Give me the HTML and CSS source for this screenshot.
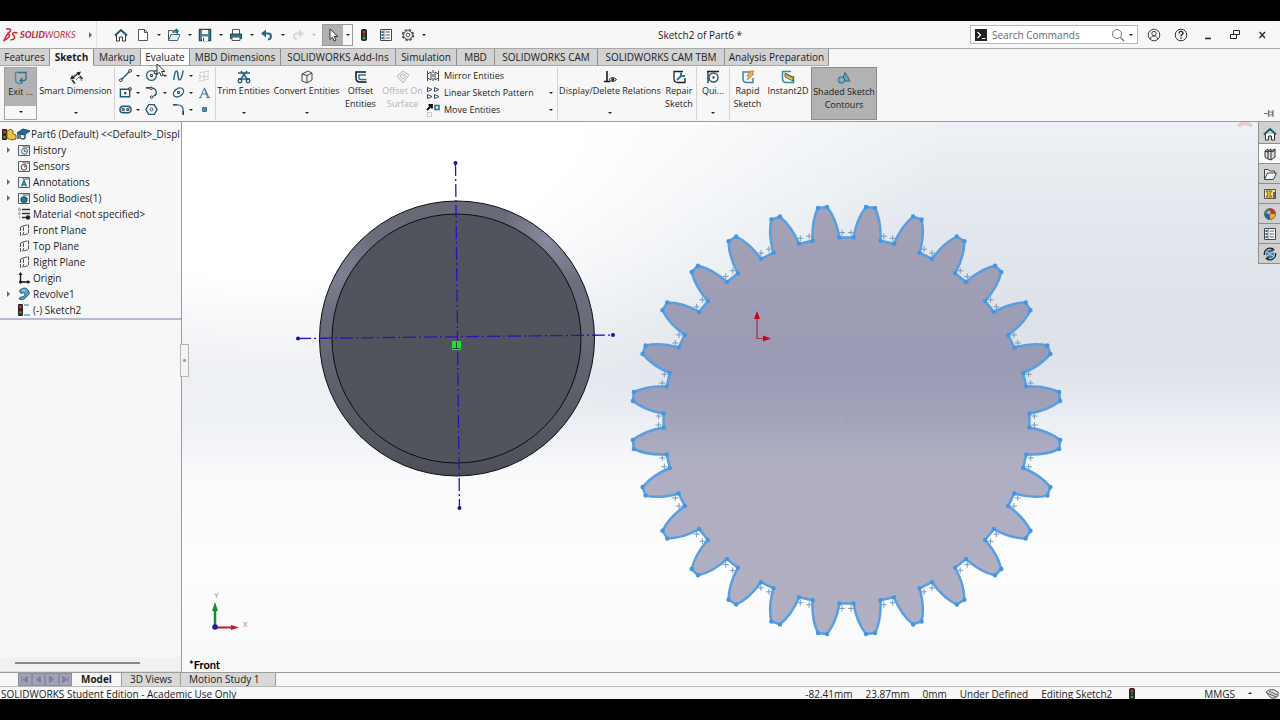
FILE: index.html
```html
<!DOCTYPE html>
<html lang="en">
<head>
    <meta charset="UTF-8">
    <meta name="viewport" content="width=device-width, initial-scale=1.0">
    <title>Sketch2 of Part6 *</title>
    <link rel="stylesheet" href="styles.css">
</head>
<body>
    <!-- shared icons -->
    <svg class="sprite" width="0" height="0">
        <symbol id="home" viewBox="0 0 14 14"><path d="M2.500 7v6h3V9h3v4h3V7" fill="#fff" stroke="#333" /><path d="M1 7.500 7 2l6 5.500" fill="none" stroke="#1d5a76" stroke-width="2" /></symbol>
        <symbol id="folder" viewBox="0 0 14 14"><path d="M1.500 12.500v-10h4l1 1.500h6v8.500z" fill="#f0f2f4" stroke="#555e68" /><path d="M6 2.500h6.500V4" fill="none" stroke="#555e68" /></symbol>
        <symbol id="plane" viewBox="0 0 14 14"><path d="M3.500 4l3-1.500v9l-3 1zM6.500 3l5-1.500v9l-5 1.500" fill="none" stroke="#555" stroke-dasharray="4 1" /></symbol>
        <symbol id="lights" viewBox="0 0 14 14"><rect x="4" y="1" width="6" height="12" rx="2" fill="#222" /><circle cx="7" cy="4" r="1.600" fill="#c33" /><circle cx="7" cy="7" r="1.200" fill="#553" /><circle cx="7" cy="10" r="1.600" fill="#2a9a3a" /></symbol>
        <symbol id="list" viewBox="0 0 14 14"><path d="M1.500 1.500h11v11h-11z" fill="#fff" stroke="#444" /><path d="M5 2v10" stroke="#777" /><path d="M2.500 4h2M2.500 7h2M2.500 10h2" stroke="#1d6b8a" stroke-width="2" /><path d="M6.500 4H11M6.500 7H11M6.500 10H11" stroke="#555" /></symbol>
    </svg>

    <div class="app">
        <header class="titlebar">
            <div class="brand">
                <svg class="ds" viewBox="0 0 16 14"><path d="M3 1h4c1.500 1 0 3-2.500 4.500M4.500 6C8 6 7 10 1 12.500c1-2.500 2-4 3.500-6.500zM14.500 5c-4-1.500-6 .5-4 2.500s1.500 4-3 4.500" fill="none" stroke="#c8283c" stroke-width="1.500" /></svg>
                <span class="wordmark"><b>SOLID</b>WORKS</span>
            </div>
            <button class="expand" aria-label="Show menu"><i class="tri"></i></button>
            <div class="quick">
                <button class="home" aria-label="Home"><svg class="icon"><use href="#home" /></svg></button>
                <button aria-label="New"><svg class="icon" viewBox="0 0 14 14"><path d="M2.500 1.500h6l3 3v8h-9zM8.500 1.500v3h3" fill="#fff" stroke="#555" /></svg></button>
                <button class="drop" aria-label="New options"></button>
                <button aria-label="Open"><svg class="icon" viewBox="0 0 14 14"><path d="M1.500 12V2.500h4l1 1.500h4v2" fill="#fff" stroke="#555" /><path d="M1.500 12.500 4 6.500h9l-2.500 6z" fill="#e4edf1" stroke="#44697a" /><path d="M6 5c0-3 3-3 5-2M9 1l2 2-2 2" fill="none" stroke="#1d6b8a" stroke-width="1.500" /></svg></button>
                <button class="drop" aria-label="Open options"></button>
                <button aria-label="Save"><svg class="icon" viewBox="0 0 14 14"><path d="M1.500 1.500h11v11h-11z" fill="#5d8398" stroke="#244c60" stroke-width="1.500" /><path d="M4 2h6v4H4zM4 8.500h6V13H4z" fill="#f4f7f8" /><path d="M5.500 10v3" stroke="#244c60" /></svg></button>
                <button class="drop" aria-label="Save options"></button>
                <button aria-label="Print"><svg class="icon" viewBox="0 0 14 14"><path d="M3.500 6V1.500h7V6" fill="#fff" stroke="#555" /><path d="M1.500 6h11v4.500h-11z" fill="#2b7898" stroke="#17465c" /><path d="M3 9h8v3.500H3z" fill="#fff" stroke="#555" /></svg></button>
                <button class="drop" aria-label="Print options"></button>
                <button aria-label="Undo"><svg class="icon" viewBox="0 0 14 14"><path d="M2 5.500h6c4 0 4 5 0 6" fill="none" stroke="#2b6680" stroke-width="2" /><path d="M6 1.500v8L1 5.500z" fill="#2b6680" /></svg></button>
                <button class="drop" aria-label="Undo options"></button>
                <button aria-label="Redo" disabled><svg class="icon" viewBox="0 0 14 14"><path d="M12 5.500H6c-4 0-4 5 0 6" fill="none" stroke="#d8d8d8" stroke-width="2" /><path d="M8 1.500v8l5-4z" fill="#d8d8d8" /></svg></button>
                <button class="drop faded" aria-label="Redo options"></button>
                <span class="picker">
                    <button class="select" aria-label="Select"><svg class="icon" viewBox="0 0 14 14"><path d="M4 1v10.500l2.500-2.300L8 13l2-1-1.700-3.500H12z" fill="#fff" stroke="#333" /></svg></button>
                    <button class="drop" aria-label="Select options"></button>
                </span>
                <button class="wide" aria-label="Rebuild"><svg class="icon"><use href="#lights" /></svg></button>
                <button class="wide" aria-label="File properties"><svg class="icon"><use href="#list" /></svg></button>
                <button class="wide" aria-label="Options"><svg class="icon" viewBox="0 0 14 14"><circle cx="7" cy="7" r="5.200" fill="none" stroke="#555" stroke-width="2" stroke-dasharray="2.500 1.600" /><circle cx="7" cy="7" r="4.300" fill="#fff" stroke="#555" /><circle cx="7" cy="7" r="1.800" fill="none" stroke="#555" /></svg></button>
                <button class="drop" aria-label="Options menu"></button>
            </div>
            <div class="doc-title">Sketch2 of Part6 *</div>
            <div class="search">
                <svg class="icon" viewBox="0 0 14 14"><path d="M1 1h12v12H1z" fill="#222" /><path d="M3.500 4l3 3-3 3M8 10.500h3.500" fill="none" stroke="#fff" stroke-width="1.200" /></svg>
                <input type="text" placeholder="Search Commands" aria-label="Search Commands">
                <svg class="icon" viewBox="0 0 14 14"><circle cx="6" cy="6" r="4.500" fill="none" stroke="#777" /><path d="M9.500 9.500 13 13" stroke="#777" stroke-width="1.500" /></svg>
                <button class="drop" aria-label="Search options"></button>
            </div>
            <div class="window-buttons">
                <button aria-label="Account"><svg class="icon" viewBox="0 0 14 14"><circle cx="7" cy="7" r="5.800" fill="none" stroke="#444" /><circle cx="7" cy="5.500" r="2.200" fill="none" stroke="#444" /><path d="M3.500 11c0-4 7-4 7 0" fill="none" stroke="#444" /></svg></button>
                <button aria-label="Help"><svg class="icon" viewBox="0 0 14 14"><circle cx="7" cy="7" r="5.800" fill="none" stroke="#333" /><path d="M5 5.500c0-3 4-2.500 4-.3C9 6.500 7 6.500 7 8.500M7 9.500V11" fill="none" stroke="#222" stroke-width="1.300" /></svg></button>
                <button aria-label="Minimize"><svg class="icon" viewBox="0 0 14 14"><path d="M4 10.500h6" stroke="#222" stroke-width="1.500" /></svg></button>
                <button aria-label="Restore"><svg class="icon" viewBox="0 0 14 14"><path d="M5.500 6V2.500h6v4h-3M2.500 6.500h6v4h-6z" fill="none" stroke="#222" /></svg></button>
                <button aria-label="Close"><svg class="icon" viewBox="0 0 14 14"><path d="M4.500 4l5.500 6M10 4l-5.500 6" stroke="#222" stroke-width="1.200" /></svg></button>
            </div>
        </header>

        <nav class="tabs">
            <button>Features</button>
            <button class="active">Sketch</button>
            <button>Markup</button>
            <button class="hover">Evaluate
                <svg class="pointer" viewBox="0 0 10 15"><path d="M1 1v10.500l2.500-2.300L5.200 13l2-1L5.500 8.500H9z" fill="#fff" stroke="#333" /></svg>
            </button>
            <button>MBD Dimensions</button>
            <button>SOLIDWORKS Add-Ins</button>
            <button>Simulation</button>
            <button>MBD</button>
            <button>SOLIDWORKS CAM</button>
            <button>SOLIDWORKS CAM TBM</button>
            <button>Analysis Preparation</button>
        </nav>

        <div class="ribbon">
            <button class="tool exit">
                <svg class="icon" viewBox="0 0 14 14"><path d="M4 1.500H1.500v7q0 4 4 4H8" fill="none" stroke="#4a8fb0" stroke-width="1.500" /><path d="M4 1.500h8v6q0 2-2 2H6M8.500 7 6 9.500 8.500 12" fill="none" stroke="#2a6f94" stroke-width="1.300" /></svg>
                <span>Exit ...</span><i class="caret"></i>
            </button>
            <button class="tool">
                <svg class="icon" viewBox="0 0 14 14"><path d="M3 8.500 10 2.500" stroke="#222" stroke-width="1.500" /><path d="M1 9.500 3 5l3 3.500zM12 1.500 7.500 2.500 10 6z" fill="#222" /><path d="M3 10l3 3.500M11 6l2.500 3" stroke="#222" stroke-width="1.500" /><path d="M7 10l3-3 3 4" fill="none" stroke="#3a7f9a" /></svg>
                <span>Smart Dimension</span><i class="caret"></i>
            </button>
            <div class="sketch-tools">
                <button aria-label="Line"><svg class="icon" viewBox="0 0 14 14"><path d="M2 12 12 2" stroke="#1d5a76" stroke-width="1.500" /><circle cx="2" cy="12" r="1.500" fill="#fff" stroke="#222" /><circle cx="12" cy="2" r="1.500" fill="#fff" stroke="#222" /></svg></button>
                <i class="caret"></i>
                <button aria-label="Circle"><svg class="icon" viewBox="0 0 14 14"><circle cx="7" cy="7" r="5.300" fill="none" stroke="#2b6b86" stroke-width="1.500" /><path d="M6 6h2v2H6zM10 2h3v3h-3z" fill="#fff" stroke="#222" /></svg></button>
                <i class="caret"></i>
                <button aria-label="Spline"><svg class="icon" viewBox="0 0 14 14"><path d="M2 12C3 0 6 0 6.500 7s3.500 7 5.500-5.500" fill="none" stroke="#2b6b86" stroke-width="1.600" /></svg></button>
                <i class="caret"></i>
                <button aria-label="Sketch plane" disabled><svg class="icon" viewBox="0 0 14 14"><path d="M2 4l9-2v9l-9 2zM2 8h9M6.500 3v9" fill="none" stroke="#bbb" stroke-dasharray="2 1" /></svg></button>

                <button aria-label="Rectangle"><svg class="icon" viewBox="0 0 14 14"><path d="M1.500 3.500h10v8h-10z" fill="none" stroke="#1d5a76" stroke-width="1.500" /><path d="M6 7h1.500v1.500H6zM10.500 2H13v2.500h-2.500z" fill="#fff" stroke="#222" /></svg></button>
                <i class="caret"></i>
                <button aria-label="Arc"><svg class="icon" viewBox="0 0 14 14"><path d="M1 2h5" stroke="#222" stroke-width="1.500" /><path d="M6 2c7 0 8 7 3 9" fill="none" stroke="#1d5a76" stroke-width="1.500" /><circle cx="6.500" cy="2.500" r="1.300" fill="#fff" stroke="#222" /><circle cx="7" cy="12" r="1.300" fill="#fff" stroke="#222" /></svg></button>
                <i class="caret"></i>
                <button aria-label="Ellipse"><svg class="icon" viewBox="0 0 14 14"><ellipse cx="7" cy="7" rx="6" ry="4.200" transform="rotate(-35 7 7)" fill="none" stroke="#2b6b86" stroke-width="1.500" /><path d="M6 6h2v2H6z" fill="#fff" stroke="#222" /></svg></button>
                <i class="caret"></i>
                <button aria-label="Text"><svg class="icon" viewBox="0 0 14 14"><path d="M1 12.500h3M9 12.500h4M2.500 12 7 2l4.500 10M4.300 8.500h5.200M7 2.500l3 9.500" fill="none" stroke="#3a7488" /></svg></button>

                <button aria-label="Slot"><svg class="icon" viewBox="0 0 14 14"><rect x="1" y="3.500" width="12" height="7" rx="3.500" fill="#dce6ea" stroke="#1d5a76" stroke-width="1.500" /><path d="M3.500 6h2v2h-2zM8.500 6h2v2h-2z" fill="none" stroke="#333" /></svg></button>
                <i class="caret"></i>
                <button aria-label="Polygon"><svg class="icon" viewBox="0 0 14 14"><path d="M4 1.800h6L13 7l-3 5.200H4L1 7z" fill="none" stroke="#1d5a76" stroke-width="1.500" /><circle cx="7" cy="7" r="1.500" fill="#fff" stroke="#333" /></svg></button>
                <i></i>
                <button aria-label="Fillet"><svg class="icon" viewBox="0 0 14 14"><path d="M1 2h5M12 8v5" stroke="#111" stroke-width="1.500" /><path d="M6 2q6 0 6 6" fill="none" stroke="#2b7898" stroke-width="1.500" /></svg></button>
                <i class="caret"></i>
                <button aria-label="Point"><svg class="icon" viewBox="0 0 14 14"><path d="M5 5h4v4H5z" fill="#5d98b0" stroke="#1d5a76" /></svg></button>
            </div>
            <button class="tool sep">
                <svg class="icon" viewBox="0 0 14 14"><path d="M1 3h12M1 9h12M4 1l7 9M10 1 3 10" stroke="#28627c" stroke-width="1.500" /><circle cx="3" cy="11" r="1.800" fill="none" stroke="#1d5a76" stroke-width="1.300" /><circle cx="11" cy="11" r="1.800" fill="none" stroke="#1d5a76" stroke-width="1.300" /></svg>
                <span>Trim Entities</span><i class="caret"></i>
            </button>
            <button class="tool">
                <svg class="icon" viewBox="0 0 14 14"><path d="M2 4l6-3 4 2v7l-5 3-5-2zM2 4l5 1.500V13M7 5.500 12 3" fill="#eef0f1" stroke="#444" /></svg>
                <span>Convert Entities</span><i class="caret"></i>
            </button>
            <button class="tool">
                <svg class="icon" viewBox="0 0 14 14"><path d="M12 2H2v6q0 4 4 4h6.500" fill="none" stroke="#111" stroke-width="1.500" /><path d="M12 5H5v3q0 1.500 2 1.500h5.500" fill="none" stroke="#2b7898" stroke-width="1.500" /></svg>
                <span>Offset<br>Entities</span>
            </button>
            <button class="tool" disabled>
                <svg class="icon" viewBox="0 0 14 14"><path d="M1 6l6-5 6 4-6 8zM4 6l3-2 3 2-3 3z" fill="#eee" stroke="#bbb" /></svg>
                <span>Offset On<br>Surface</span>
            </button>
            <div class="stack">
                <button><svg class="icon" viewBox="0 0 14 14"><path d="M7 1v12" stroke="#333" stroke-dasharray="3 1" /><path d="M1.500 2v10M1.500 5 5 3v8L1.500 9M12.500 2v10M12.500 5 9 3v8l3.500-2" fill="none" stroke="#444" /></svg>Mirror Entities</button><i></i>
                <button><svg class="icon" viewBox="0 0 14 14"><path d="M1.500 1.500v4L6 3.500zM8.500 1.500v4l4.500-2zM1.500 8.500v4l4.500-2zM8.500 8.500v4l4.500-2z" fill="#fff" stroke="#345" /></svg>Linear Sketch Pattern</button><i class="caret"></i>
                <button><svg class="icon" viewBox="0 0 14 14"><path d="M9 2.500h4v4H9z" fill="#fff" stroke="#1d6b8a" stroke-width="1.500" /><path d="M1 7l5-5M2.500 2H6v3.500" fill="none" stroke="#111" stroke-width="1.800" /><path d="M1.500 9.500h4v4h-4z" fill="none" stroke="#999" stroke-dasharray="1 1" /></svg>Move Entities</button><i class="caret"></i>
            </div>
            <button class="tool sep">
                <svg class="icon" viewBox="0 0 14 14"><path d="M4 1v10M1 11.500h6" stroke="#111" stroke-width="1.500" /><path d="M6 9.500q3.500-4 7.500 0-4 4-7.500 0z" fill="#fff" stroke="#222" /><circle cx="9.800" cy="9.500" r="1.500" fill="#222" /></svg>
                <span>Display/Delete Relations</span><i class="caret"></i>
            </button>
            <button class="tool">
                <svg class="icon" viewBox="0 0 14 14"><path d="M11 1.500H2v7q0 4 4 4h7V8" fill="none" stroke="#222" stroke-width="1.300" /><path d="M5 10l5-5M9 2.500v3.500h4" fill="none" stroke="#2b7898" stroke-width="2" /></svg>
                <span>Repair<br>Sketch</span>
            </button>
            <button class="tool sep">
                <svg class="icon" viewBox="0 0 14 14"><path d="M1 1.500h12M2 1v12" stroke="#222" stroke-width="1.300" /><circle cx="7.500" cy="7.500" r="4.500" fill="none" stroke="#2b5a70" stroke-width="1.500" /><path d="M6.500 6.500h2v2h-2z" fill="#222" /></svg>
                <span>Qui...</span><i class="caret"></i>
            </button>
            <button class="tool sep">
                <svg class="icon" viewBox="0 0 14 14"><path d="M9 2H2v7q0 3.500 4 3.500h6V8" fill="none" stroke="#3a8aa8" stroke-width="1.500" /><path d="M9 1h4l-2 3h2L6 10l2-4H6z" fill="#f2b233" stroke="#c05a20" stroke-width=".6" /></svg>
                <span>Rapid<br>Sketch</span>
            </button>
            <button class="tool">
                <svg class="icon" viewBox="0 0 14 14"><path d="M10 1.500H1.500v7q0 4 4 4h7V6" fill="none" stroke="#3a8aa8" stroke-width="1.500" /><path d="M4 3l8 4v4L4 7z" fill="#e8cf4a" stroke="#444" stroke-width=".8" /><path d="M6 4v2M8 5v2M10 6v2" stroke="#444" stroke-width=".8" /></svg>
                <span>Instant2D</span>
            </button>
            <button class="tool pressed">
                <svg class="icon" viewBox="0 0 14 14"><path d="M8 1.500 13 10H5z" fill="#6fa3b8" stroke="#28627c" /><circle cx="4.500" cy="9" r="3.200" fill="#7db0c4" stroke="#28627c" /></svg>
                <span>Shaded Sketch<br>Contours</span>
            </button>
            <button class="pin" aria-label="Pin ribbon"><svg class="icon" viewBox="0 0 14 14"><path d="M2 7.500h4M6.500 4v7M6.500 6h4v3h-4M11 4v7" fill="none" stroke="#777" stroke-width="1.200" /></svg></button>
        </div>

        <main class="workspace">
            <aside class="panel">
                <ul class="tree">
                    <li class="root"><svg class="icon root-icon" viewBox="0 0 28 14"><rect x="0" y="2" width="5" height="11" rx="1" fill="#322" /><circle cx="2.500" cy="5" r="1.500" fill="#c33" /><circle cx="2.500" cy="10" r="1.500" fill="#2a9a3a" /><path d="M5 4l4-2 2 2v3l3 1v4l-4 1-5-2z" fill="#f0c23a" stroke="#7a6418" /><path d="M15 6l6-4 7 2-6 4z" fill="#24708e" stroke="#174a60" /><path d="M18 7v4q3 2 5 0V7M16 6v6" fill="none" stroke="#24566a" stroke-width="1.500" /></svg>Part6 (Default) &lt;&lt;Default&gt;_Displ</li>
                    <li><i class="tri"></i><svg class="icon" viewBox="0 0 14 14"><use href="#folder" /><circle cx="7.500" cy="8.300" r="3" fill="#dfeaf0" stroke="#4b6f82" /><path d="M7.500 6.500v2h2" fill="none" stroke="#4b6f82" /></svg>History</li>
                    <li><i></i><svg class="icon" viewBox="0 0 14 14"><use href="#folder" /><circle cx="7" cy="8.300" r="2.800" fill="#fff" stroke="#444" /><path d="M7 8.300 9 6.500" stroke="#c33" stroke-width="1.500" /></svg>Sensors</li>
                    <li><i class="tri"></i><svg class="icon" viewBox="0 0 14 14"><use href="#folder" /><path d="M4.500 11.500 7 5.500l2.500 6M5.500 9.500h3" fill="none" stroke="#1d6b8a" stroke-width="1.300" /></svg>Annotations</li>
                    <li><i class="tri"></i><svg class="icon" viewBox="0 0 14 14"><use href="#folder" /><path d="M4 7l3-1.500L10 7v3.500L7 12l-3-1.500z" fill="#2b7898" stroke="#174a60" /></svg>Solid Bodies(1)</li>
                    <li><i></i><svg class="icon" viewBox="0 0 14 14"><path d="M5 2.500h8M5 6.500h8M5 10.500h4" stroke="#333" stroke-width="1.500" /><circle cx="2.500" cy="2.500" r="1.200" fill="#d8c860" stroke="#777" stroke-width=".5" /><circle cx="2.500" cy="6.500" r="1.200" fill="#8ab" /><circle cx="2.500" cy="10.500" r="1.200" fill="#dc8" /><circle cx="11" cy="10.500" r="2.200" fill="#222" /></svg>Material &lt;not specified&gt;</li>
                    <li><i></i><svg class="icon"><use href="#plane" /></svg>Front Plane</li>
                    <li><i></i><svg class="icon"><use href="#plane" /></svg>Top Plane</li>
                    <li><i></i><svg class="icon"><use href="#plane" /></svg>Right Plane</li>
                    <li><i></i><svg class="icon" viewBox="0 0 14 14"><path d="M3.500 3v8H11" fill="none" stroke="#111" stroke-width="1.300" /><path d="M1.500 4 3.500 1l2 3zM10.500 9l3 2-3 2z" fill="#111" /><circle cx="3.500" cy="11" r="1.500" fill="#111" /></svg>Origin</li>
                    <li><i class="tri"></i><svg class="icon" viewBox="0 0 14 14"><path d="M3 3Q8-1 11 3t-1 6q-3 5-8 3 0-2 3-2 4-1 3-3T4 6.500Q2 5 3 3z" fill="#5aa0bc" stroke="#23627c" /><path d="M5 3.500q3-1.500 4 1" fill="none" stroke="#cfe4ec" /></svg>Revolve1</li>
                    <li><i></i><svg class="icon" viewBox="0 0 14 14"><rect x="1" y="1" width="5" height="12" rx="1" fill="#322" /><circle cx="3.500" cy="4" r="1.400" fill="#c33" /><circle cx="3.500" cy="9.500" r="1.400" fill="#2a9a3a" /><path d="M7 2h5M7 12h6" stroke="#6aa4c0" stroke-width="1.500" /></svg>(-) Sketch2</li>
                </ul>
                <div class="hscroll"><div class="thumb"></div></div>
                <button class="grip" aria-label="Collapse panel"></button>
            </aside>

            <div class="canvas">
                <svg class="scene" viewBox="182 122 1098 550" preserveAspectRatio="xMinYMin meet">
                    <defs>
                        <linearGradient id="rim" x1="0" y1="0" x2="0" y2="1">
                            <stop offset="0" stop-color="#666874" />
                            <stop offset=".2" stop-color="#6d6f7e" />
                            <stop offset=".45" stop-color="#6a6c7a" />
                            <stop offset=".8" stop-color="#575a64" />
                            <stop offset="1" stop-color="#4c4f58" />
                        </linearGradient>
                        <radialGradient id="shine">
                            <stop offset="0" stop-color="#8a8b9f" />
                            <stop offset="1" stop-color="#8a8b9f" stop-opacity="0" />
                        </radialGradient>
                        <linearGradient id="gearFill" x1="0" y1="0" x2="0" y2="1">
                            <stop offset="0" stop-color="#a3a2b6" />
                            <stop offset=".38" stop-color="#9a9ab5" />
                            <stop offset=".48" stop-color="#a2a2ba" />
                            <stop offset=".6" stop-color="#afaec2" />
                            <stop offset="1" stop-color="#b1b0c2" />
                        </linearGradient>
                        <clipPath id="disc"><circle cx="457" cy="338.500" r="137.500" /></clipPath>
                    </defs>

                    <!-- revolved body -->
                    <circle cx="457" cy="338.500" r="137.500" fill="url(#rim)" />
                    <g clip-path="url(#disc)">
                        <ellipse cx="547" cy="240" rx="52" ry="34" transform="rotate(48 547 240)" fill="url(#shine)" />
                        <ellipse cx="342" cy="275" rx="52" ry="26" transform="rotate(-58 342 275)" fill="url(#shine)" opacity=".6" />
                    </g>
                    <circle cx="457" cy="338.500" r="137.500" fill="none" stroke="#0c0c12" />
                    <circle cx="456.500" cy="338.500" r="124.500" fill="#50545d" stroke="#0c0c12" />
                    <g class="centerline">
                        <path d="M455.500 163 459.500 508M298 338.500 613 335" />
                        <circle cx="455.500" cy="163" r="2" /><circle cx="459.500" cy="508" r="2" />
                        <circle cx="298" cy="338.500" r="2" /><circle cx="613" cy="335" r="2" />
                    </g>
                    <path d="M452 341h9v9h-9z" fill="#22dd3a" />
                    <path d="M456.500 342v6M453 348.500h7" stroke="#0b5a16" />

                    <!-- gear outline is filled in by script.js -->
                    <path id="gear" fill="url(#gearFill)" stroke="#559fe2" stroke-width="2.500" stroke-linejoin="round" />
                    <path id="gearPoints" class="points" />
                    <path id="gearMarks" class="marks" />
                    <path d="M843 420.500h6M846 417.500v6" stroke="#8b9fc4" stroke-dasharray="1 1" />

                    <!-- sketch origin -->
                    <path d="M757 318v20.500h7" fill="none" stroke="#a03048" stroke-width="1.200" />
                    <path d="M754 319l3-8 3 8zM763 335.500l8 3-8 3z" fill="#d0021b" />

                    <!-- view triad -->
                    <path d="M215 627V610" stroke="#1c8a2c" stroke-width="2.500" />
                    <path d="M212 611l3-9 3 9z" fill="#1c8a2c" />
                    <path d="M215 627.500h18" stroke="#c0182a" stroke-width="2" />
                    <path d="M231 625l8 2.500-8 2.500z" fill="#c0182a" />
                    <circle cx="215" cy="627" r="2.800" fill="#1a1ab0" />
                    <text x="214" y="598" class="axis" fill="#5aa468">Y</text>
                    <text x="243" y="627" class="axis" fill="#d06a78">X</text>
                    <text x="189" y="669" class="view-name">*Front</text>
                    <path d="M1237 125l4-3h3l1 1 1-1h3l4 3-2 2-6-2-6 2z" fill="#e6c8cf" />
                </svg>
                <nav class="taskpane">
                    <button aria-label="Resources"><svg class="icon"><use href="#home" /></svg></button>
                    <button class="open" aria-label="Design library"><svg class="icon" viewBox="0 0 14 14"><path d="M2 4l3-2v10l-3-2zM5 4l3-2v11l-3-1M8 4l4-2v8l-4 3M2 4l3 1 3-1 2 1 2-3" fill="#ddd" stroke="#333" /></svg></button>
                    <button aria-label="File explorer"><svg class="icon" viewBox="0 0 14 14"><path d="M1.500 12V2.500h4l1 1.500h5v2M1.500 12.500l3-6.500h9l-3 6.500z" fill="#f6f6f6" stroke="#444" /></svg></button>
                    <button aria-label="View palette"><svg class="icon" viewBox="0 0 14 14"><path d="M1.500 2.500h11v9h-11z" fill="#f0e3a0" stroke="#555" /><path d="M3 4h6L7 7l2 3H3l2-3z" fill="#d9b92e" stroke="#6a5a18" stroke-width=".8" /><path d="M11 5v6" stroke="#444" stroke-width="1.500" /></svg></button>
                    <button aria-label="Appearances"><svg class="icon" viewBox="0 0 14 14"><path d="M7 7V1.500A5.500 5.500 0 0 1 12.500 7z" fill="#d8322c" /><path d="M7 7h5.500A5.500 5.500 0 0 1 7 12.500z" fill="#e4b62c" /><path d="M7 7v5.500A5.500 5.500 0 0 1 1.500 7z" fill="#2d5fb8" /><path d="M7 7H1.500A5.500 5.500 0 0 1 7 1.500z" fill="#37a048" /><circle cx="7" cy="7" r="5.500" fill="none" stroke="#333" stroke-width=".6" /><circle cx="6" cy="5.500" r="1.500" fill="#fff" opacity=".6" /></svg></button>
                    <button aria-label="Custom properties"><svg class="icon"><use href="#list" /></svg></button>
                    <button aria-label="Forum"><svg class="icon" viewBox="0 0 14 14"><circle cx="7" cy="7" r="4.200" fill="#3a7ab4" /><path d="M3.500 5q3 3 7 0M3.500 9q3-3 7 0" fill="none" stroke="#cfe0f0" /><path d="M1.500 8A5.500 5.500 0 0 1 10 2.200M12.500 6A5.500 5.500 0 0 1 4 11.800" fill="none" stroke="#222" stroke-width="1.300" /><path d="M9 .5l3 2.500-4 1zM5 13.500 2 11l4-1z" fill="#222" /></svg></button>
                </nav>
            </div>
        </main>

        <div class="sheet-tabs">
            <div class="pager">
                <button aria-label="First"><svg viewBox="0 0 10 10"><path d="M2 1.500v7M8 1.500v7L3.500 5z" /></svg></button>
                <button aria-label="Previous"><svg viewBox="0 0 10 10"><path d="M7 1.500v7L3 5z" /></svg></button>
                <button aria-label="Next"><svg viewBox="0 0 10 10"><path d="M3 1.500v7L7 5z" /></svg></button>
                <button aria-label="Last"><svg viewBox="0 0 10 10"><path d="M8 1.500v7M2 1.500v7L6.500 5z" /></svg></button>
            </div>
            <button class="sheet current">Model</button>
            <button class="sheet">3D Views</button>
            <button class="sheet study">Motion Study 1</button>
        </div>

        <footer class="status">
            <span class="edition">SOLIDWORKS Student Edition - Academic Use Only</span>
            <span>-82.41mm</span>
            <span>23.87mm</span>
            <span>0mm</span>
            <span>Under Defined</span>
            <span>Editing Sketch2</span>
            <svg class="icon"><use href="#lights" /></svg>
            <span class="units">MMGS</span>
            <i class="caret up"></i>
            <svg class="icon" viewBox="0 0 14 14"><path d="M1 5q5-5 12 0v4q-4 4-8 1zM2 6l9 4M4 4l8 4" fill="#ddd" stroke="#555" /></svg>
        </footer>
    </div>
    <script src="script.js"></script>
</body>
</html>
```
FILE: styles.css
```css
* {
    box-sizing: border-box;
}
body {
    margin: 0;
    height: 100vh;
    padding: 21px 0;
    background: #000;
    color: #1c1c1c;
    font-family: "Open Sans", "Noto Sans", sans-serif;
    font-size: 10px;
    overflow: hidden;
}
button {
    margin: 0;
    padding: 0;
    border: 0;
    background: none;
    color: inherit;
    font: inherit;
}
.sprite {
    position: absolute;
}
.icon {
    display: block;
    flex: none;
    width: 14px;
    height: 14px;
}
.app {
    display: flex;
    flex-direction: column;
    height: 100%;
    background: #f7f7f7;
}

/* Small arrows */
.caret, .drop {
    display: flex;
    align-items: center;
    justify-content: center;
}
.caret::before, .drop::before {
    content: "";
    border: 2px solid transparent;
    border-top-color: #222;
    border-bottom: 0;
}
.caret.up::before {
    border: 2px solid transparent;
    border-bottom-color: #222;
    border-top: 0;
}
.drop.faded::before {
    border-top-color: #bbb;
}
.tri {
    display: block;
    width: 0;
    height: 0;
    border: 3px solid transparent;
    border-left-color: #666;
    border-right: 0;
}

/* Title bar */
.titlebar {
    display: flex;
    align-items: center;
    flex: none;
    height: 27px;
}
.brand {
    display: flex;
    align-items: center;
    gap: 1px;
    width: 84px;
    padding-left: 3px;
    color: #c8283c;
}
.ds {
    width: 16px;
    height: 14px;
}
.wordmark {
    font-family: "Lato", sans-serif;
    font-size: 9px;
    font-style: italic;
}
.wordmark b {
    font-weight: 900;
}
.expand {
    width: 13px;
    height: 27px;
    padding-left: 5px;
    border-right: 1px solid #e2e2e2;
}
.quick {
    display: flex;
    align-items: center;
    width: 333px;
    padding-left: 17px;
}
.quick button {
    display: flex;
    align-items: center;
    justify-content: center;
    flex: none;
    width: 14px;
}
.quick .home {
    margin-right: 8px;
}
.quick .drop {
    width: 17px;
}
.picker {
    display: flex;
    height: 22px;
    border: 1px solid #9a9a9a;
}
.quick .select {
    width: 20px;
    background: #b0b0b0;
}
.picker .drop {
    width: 9px;
}
.quick .wide {
    width: 22px;
}
.quick .wide + .drop {
    width: 10px;
}
.doc-title {
    flex: 1;
    text-align: center;
}
.search {
    display: flex;
    align-items: center;
    width: 168px;
    height: 19px;
    padding-left: 3px;
    border: 1px solid #b8b8b8;
    background: #fff;
}
.search input {
    flex: 1;
    min-width: 0;
    padding: 0 4px;
    border: 0;
    outline: 0;
    background: none;
    font: inherit;
}
.search input::placeholder {
    color: #666;
}
.search .drop {
    width: 12px;
    height: 16px;
}
.window-buttons {
    display: flex;
    justify-content: space-around;
    width: 142px;
    padding: 0 4px 0 2px;
}

/* Command tabs */
.tabs {
    display: grid;
    grid-template-columns: 50px 44px 47px 49px 91px 115px 61px 38px 103px 127px 104px;
    flex: none;
    height: 18px;
    border-top: 1px solid #a8a8a8;
}
.tabs button {
    border-right: 1px solid #8e8e8e;
    border-bottom: 1px solid #a8a8a8;
    background: #d2d2d2;
    white-space: nowrap;
}
.tabs .active {
    border-bottom-color: #f7f7f7;
    background: #f7f7f7;
    font-weight: 700;
}
.tabs .hover {
    position: relative;
    background: #fdfdfd;
}
.pointer {
    position: absolute;
    z-index: 2;
    left: 15px;
    top: 14px;
    width: 10px;
    height: 15px;
}

/* Ribbon */
.ribbon {
    display: grid;
    grid-template-columns: 33px 77px 101px 56px 71px 37px 47px 131px 105px 34px 33px 36px 46px 66px 1fr;
    flex: none;
    height: 56px;
    padding: 1px 4px;
    border-bottom: 1px solid #9c9c9c;
    font-size: 9px;
}
.tool {
    display: flex;
    flex-direction: column;
    align-items: center;
    padding-top: 3px;
    line-height: 13px;
    white-space: nowrap;
}
.tool .caret {
    height: 6px;
    margin-top: auto;
    margin-bottom: 4px;
}
.tool:disabled {
    color: #b4b4b4;
}
.sep {
    border-left: 1px solid #d4d4d4;
}
.exit {
    border: 1px solid #a4a4a4;
    background: linear-gradient(#b2b2b2 38px, #f7f7f7 38px);
}
.pressed {
    border: 1px solid #8c8c8c;
    background: #b2b2b2;
}
.sketch-tools {
    display: grid;
    grid-template-columns: 18px 8px 18px 9px 18px 8px 18px;
    grid-template-rows: repeat(3, 17px);
    align-items: center;
    padding-left: 1px;
    border-left: 1px solid #d4d4d4;
}
.sketch-tools button {
    display: flex;
    justify-content: center;
}
.sketch-tools .icon {
    width: 13px;
    height: 13px;
}
.stack {
    display: grid;
    grid-template-columns: 1fr 12px;
    grid-template-rows: repeat(3, 17px);
    align-items: center;
}
.stack button {
    display: flex;
    align-items: center;
    gap: 4px;
    white-space: nowrap;
}
.pin {
    align-self: end;
    justify-self: end;
}

/* Feature tree */
.workspace {
    display: flex;
    flex: 1;
    min-height: 0;
}
.panel {
    position: relative;
    display: flex;
    flex-direction: column;
    flex: none;
    width: 182px;
    border-right: 1px solid #9c9c9c;
}
.tree {
    margin: 0;
    padding: 4px 0 0;
    list-style: none;
    border-bottom: 2px solid #b9b9cf;
    overflow: hidden;
}
.tree li {
    display: flex;
    align-items: center;
    height: 16px;
    white-space: nowrap;
}
.tree i {
    flex: none;
    margin: 0 7px;
    width: 3px;
}
.tree .icon {
    margin-right: 2px;
}
.tree .root {
    padding-left: 2px;
}
.tree .root .icon {
    width: 28px;
    margin-right: 1px;
}
.hscroll {
    margin-top: auto;
    height: 15px;
    padding: 5px 15px;
    border-bottom: 1px solid #ddd;
    background: #f1f1f1;
}
.thumb {
    width: 125px;
    height: 2px;
    background: #888;
}
.grip {
    position: absolute;
    z-index: 1;
    left: 180px;
    top: 222px;
    width: 9px;
    height: 33px;
    border: 1px solid #b4b4b4;
    background: radial-gradient(circle at center, #999 1px, #f4f4f4 2px);
}

/* Drawing area */
.canvas {
    position: relative;
    flex: 1;
    min-width: 0;
    background:
        radial-gradient(ellipse 62% 62% at 8% 0%, #fff 45%, rgba(255, 255, 255, 0) 100%),
        linear-gradient(#eef1f5 0%, #e3e8ee 18%, #dde2e9 36%, #dfe3ea 46%, #eceff4 55%, #fafafc 64%, #fdfdfe 80%, #f8f9fb 100%);
}
.scene {
    display: block;
    width: 100%;
    height: 100%;
}
.centerline {
    fill: #1a10a8;
}
.centerline path {
    fill: none;
    stroke: #2a14b4;
    stroke-width: 1.3;
    stroke-dasharray: 13 3 2 3;
}
.points {
    fill: none;
    stroke: #4496e0;
    stroke-width: 4.5;
    stroke-linecap: round;
}
.marks {
    fill: none;
    stroke: #7c9ab4;
}
.axis {
    font-family: "Liberation Sans", sans-serif;
    font-size: 7px;
}
.view-name {
    font-family: "Lato", sans-serif;
    font-size: 11px;
    font-weight: 700;
}

/* Task pane floats over the drawing */
.taskpane {
    position: absolute;
    top: 0;
    right: 0;
    display: flex;
    flex-direction: column;
    width: 22px;
    padding-top: 2px;
    border-left: 1px solid #8e8e8e;
    background: #d0d0d0;
}
.taskpane button {
    display: flex;
    align-items: center;
    justify-content: center;
    height: 20px;
    border-bottom: 1px solid #8e8e8e;
}
.taskpane .open {
    background: #fafafa;
}

/* Bottom bars */
.sheet-tabs {
    display: flex;
    flex: none;
    height: 15px;
    padding-left: 18px;
    border-top: 1px solid #9c9c9c;
    border-bottom: 1px solid #b8b8b8;
}
.pager {
    display: flex;
    width: 54px;
    background: #a3a3b8;
}
.pager button {
    display: flex;
    align-items: center;
    justify-content: center;
    flex: 1;
    border: 1px solid #8c8ca2;
}
.pager svg {
    width: 9px;
    height: 9px;
    fill: #8484a0;
    stroke: #77779a;
}
.sheet {
    padding: 0 8px;
    border-right: 1px solid #9c9c9c;
    background: #d8d8d8;
    line-height: 13px;
}
.sheet.current {
    padding: 0 9px;
    background: #f7f7f7;
    font-weight: 700;
}
.sheet.study {
    padding-right: 15px;
}
.status {
    display: flex;
    flex: none;
    gap: 13px;
    height: 12px;
    padding: 0 1px;
    line-height: 15px;
    overflow: hidden;
    white-space: nowrap;
}
.edition {
    flex: 1;
}
.status .units {
    margin-left: 52px;
}
```
FILE: script.js
```js
// Gear: 28 teeth, a gap is centred on the vertical axis
const cx = 846.5, cy = 420.5;
const teeth = 28;
const rootR = 183, tipR = 214.5;
const step = 2 * Math.PI / teeth;

// point at radius r, angle a measured clockwise from the top
function pt(r, a) {
    return (cx + r * Math.sin(a)).toFixed(1) + ' ' + (cy - r * Math.cos(a)).toFixed(1);
}

let outline = '';
let points = '';
let marks = '';

for (let i = 0; i < teeth; i++) {
    const a = (i + 0.5) * step;
    const rootA = 0.074, tipA = 0.021;
    outline += (i ? 'L' : 'M') + pt(rootR, a - rootA);
    outline += 'Q' + pt(202, a - 0.062) + ' ' + pt(tipR, a - tipA);
    outline += 'L' + pt(tipR, a + tipA);
    outline += 'Q' + pt(202, a + 0.062) + ' ' + pt(rootR, a + rootA);

    [[rootR, -rootA], [tipR, -tipA], [tipR, tipA], [rootR, rootA]].forEach(([r, d]) => {
        points += 'M' + pt(r, a + d) + 'h0';
    });

    // arc centre marks in the gap
    [-0.024, 0.024].forEach(d => {
        marks += 'M' + pt(188, i * step + d) + 'm-3 0h6m-3 -3v6';
    });
}

document.getElementById('gear').setAttribute('d', outline + 'Z');
document.getElementById('gearPoints').setAttribute('d', points);
document.getElementById('gearMarks').setAttribute('d', marks);
```
